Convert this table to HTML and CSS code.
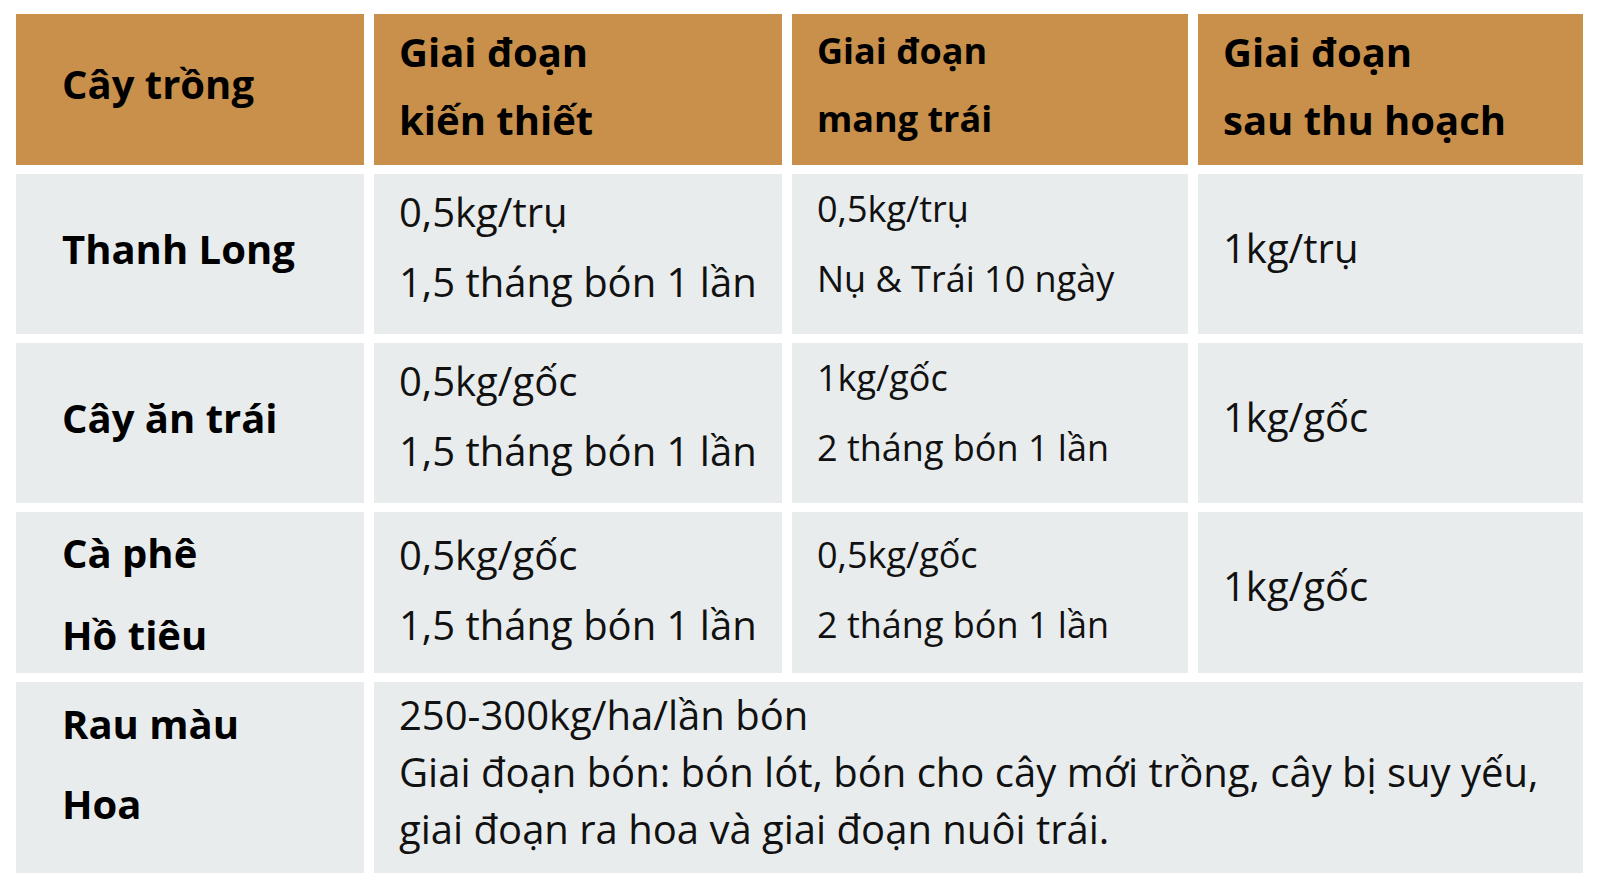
FILE: index.html
```html
<!DOCTYPE html>
<html lang="vi">
<head>
<meta charset="utf-8">
<title>Bảng liều lượng bón</title>
<link rel="stylesheet" href="styles.css">
</head>
<body>
<div class="table">
  <div class="cell head c1 single-head">Cây trồng</div>
  <div class="cell head h-lg">Giai đoạn<br>kiến thiết</div>
  <div class="cell head h-sm">Giai đoạn<br>mang trái</div>
  <div class="cell head h-lg">Giai đoạn<br>sau thu hoạch</div>

  <div class="cell body c1 name">Thanh Long</div>
  <div class="cell body two-lg">0,5kg/trụ<br>1,5 tháng bón 1 lần</div>
  <div class="cell body two-sm">0,5kg/trụ<br>Nụ &amp; Trái 10 ngày</div>
  <div class="cell body one-lg">1kg/trụ</div>

  <div class="cell body c1 name">Cây ăn trái</div>
  <div class="cell body two-lg">0,5kg/gốc<br>1,5 tháng bón 1 lần</div>
  <div class="cell body two-sm">1kg/gốc<br>2 tháng bón 1 lần</div>
  <div class="cell body one-lg">1kg/gốc</div>

  <div class="cell body c1 name-two tall">Cà phê<br>Hồ tiêu</div>
  <div class="cell body two-lg low">0,5kg/gốc<br>1,5 tháng bón 1 lần</div>
  <div class="cell body two-sm low">0,5kg/gốc<br>2 tháng bón 1 lần</div>
  <div class="cell body one-lg">1kg/gốc</div>

  <div class="cell body c1 name-two last">Rau màu<br>Hoa</div>
  <div class="cell body wide">250-300kg/ha/lần bón<br>Giai đoạn bón: bón lót, bón cho cây mới trồng, cây bị suy yếu,<br>giai đoạn ra hoa và giai đoạn nuôi trái.</div>
</div>
</body>
</html>
```

FILE: styles.css
```css
html, body {
  margin: 0;
  padding: 0;
  background: #ffffff;
}

body {
  padding: 14px 0 0 16px;
  font-family: "Open Sans", "Noto Sans", sans-serif;
  color: #111111;
}

.table {
  display: grid;
  grid-template-columns: 348px 408px 396px 385px;
  grid-template-rows: 151px 160px 160px 161px 191px;
  column-gap: 10px;
  row-gap: 9px;
  width: max-content;
}

.cell {
  box-sizing: border-box;
  padding-left: 25px;
  white-space: nowrap;
}

.cell.c1 {
  padding-left: 46px;
}

.head {
  background: #c8904a;
  color: #000000;
  font-weight: 700;
}

.body {
  background: #e9eced;
}

.single-head {
  font-size: 40px;
  line-height: 68px;
  padding-top: 36px;
}

.h-lg {
  font-size: 40px;
  line-height: 68px;
  padding-top: 4px;
}

.h-sm {
  font-size: 36px;
  line-height: 68px;
  padding-top: 3px;
}

.name {
  font-size: 40px;
  font-weight: 700;
  color: #000000;
  line-height: 70px;
  padding-top: 40px;
}

.name-two {
  font-size: 40px;
  font-weight: 700;
  color: #000000;
  line-height: 82px;
  padding-top: 0;
}

.name-two.tall {
  line-height: 82px;
  padding-top: 0;
}

.name-two.last {
  line-height: 80px;
  padding-top: 2px;
}

.two-lg {
  font-size: 40px;
  line-height: 70px;
  padding-top: 3px;
}

.two-sm {
  font-size: 36px;
  line-height: 70px;
  padding-top: 0;
}

.low {
  padding-top: 8px;
}

.one-lg {
  font-size: 40px;
  line-height: 70px;
  padding-top: 39px;
}

.wide {
  grid-column: span 3;
  font-size: 40px;
  line-height: 57px;
  padding-top: 4px;
}
```
